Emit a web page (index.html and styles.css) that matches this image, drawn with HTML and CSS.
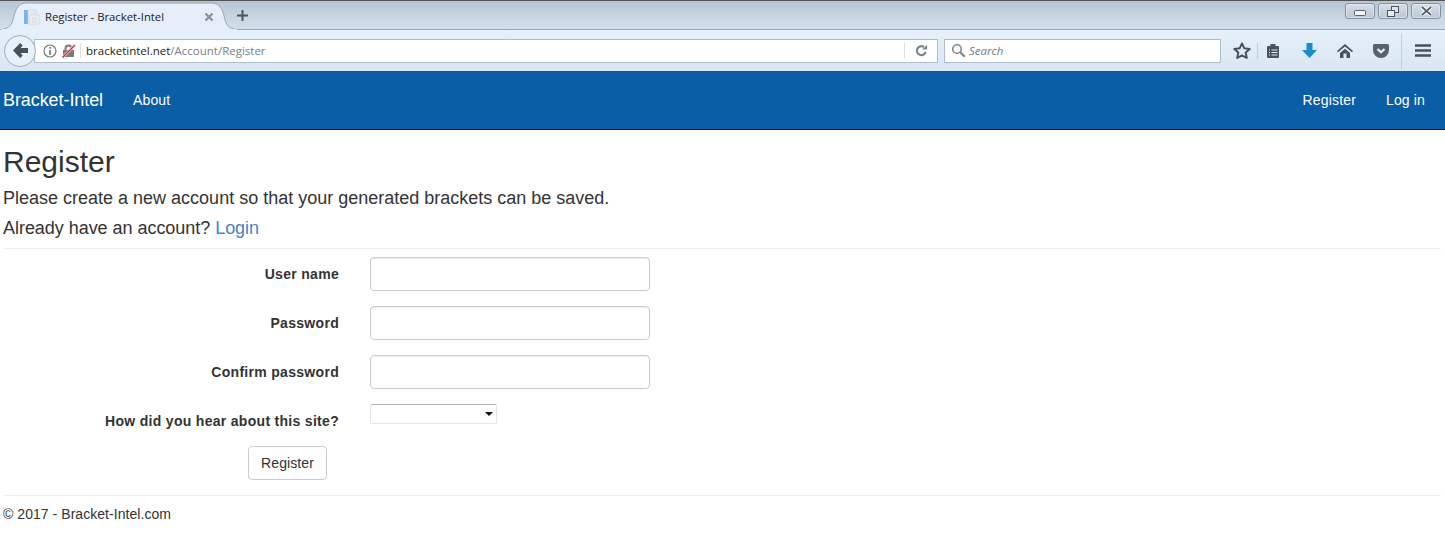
FILE: index.html
```html
<!DOCTYPE html>
<html lang="en">
<head>
  <meta charset="UTF-8" />
  <title>Register - Bracket-Intel</title>
  <link rel="stylesheet" href="styles.css">
</head>
<body>

  <!-- browser frame -->
  <div class="tabstrip">
    <div class="tab">
      <svg class="tab-shape" width="238" height="29" viewBox="0 0 238 29">
        <path d="M0 28.500C7 28 11 26 13 19 15 10 17 2.500 26 2 L212 2 C221 2.500 223 10 225 19 227 26 231 28 238 28.500z" fill="#e6eff9" stroke="#9aa6b4"/>
        <path d="M1 29h236" stroke="#e6eff9" stroke-width="2"/>
      </svg>
      <svg class="tab-icon" width="16" height="16" viewBox="0 0 16 16">
        <rect x="0" y="1" width="4" height="14" fill="#78b4e4"/>
        <rect x="4" y="1" width="8" height="14" fill="#e4eaf1" stroke="#ccd4dc" stroke-width=".6"/>
        <rect x="6" y="6" width="9" height="9" fill="#eef1f5" stroke="#ccd4dc" stroke-width=".6"/>
        <path d="M8 9h5M8 11h5M8 13h5" stroke="#cfd6dc" stroke-width="1"/>
      </svg>
      <span class="tab-title">Register - Bracket-Intel</span>
      <svg class="tab-close" width="10" height="10" viewBox="0 0 10 10"><path d="M1.500 1.500l7 7M8.500 1.500l-7 7" stroke="#8a9097" stroke-width="2.200"/></svg>
    </div>
    <svg class="new-tab" width="11" height="11" viewBox="0 0 11 11"><path d="M5.500 0v11M0 5.500h11" stroke="#4c5660" stroke-width="2"/></svg>
    <div class="win-buttons">
      <div class="win-btn"><svg class="win-min" width="12" height="6" viewBox="0 0 12 6"><rect x=".5" y=".5" width="11" height="5" rx="1" fill="#f2f4f6" stroke="#59626c"/></svg></div>
      <div class="win-btn"><svg width="12" height="11" viewBox="0 0 12 11"><rect x="4.500" y=".5" width="7" height="6" fill="#dfe6ed" stroke="#4d5660"/><rect x=".5" y="4.500" width="7" height="6" fill="#e8edf2" stroke="#4d5660"/></svg></div>
      <div class="win-btn"><svg width="13" height="10" viewBox="0 0 13 10"><path d="M2 1l9 8M11 1l-9 8" stroke="#fff" stroke-width="4"/><path d="M2 1l9 8M11 1l-9 8" stroke="#59626c" stroke-width="1.800"/></svg></div>
    </div>
  </div>

  <div class="toolbar">
    <button class="back-btn" type="button">
      <svg width="15" height="15" viewBox="0 0 15 15"><path d="M7.200 0L0 7.500 7.200 15l2.500-2.500L7.600 10H15V5H7.600l2.100-2.500z" fill="#48525c"/></svg>
    </button>
    <div class="urlbar">
      <svg class="info" width="14" height="14" viewBox="0 0 14 14"><circle cx="7" cy="7" r="6" fill="none" stroke="#6d747b" stroke-width="1.100"/><path d="M7 3v1.800M7 6v5" stroke="#6d747b" stroke-width="1.600"/></svg>
      <svg class="lock" width="14" height="14" viewBox="0 0 14 14"><rect x="1" y="6" width="11" height="7" fill="#7a7a7a"/><path d="M3.500 6V4.500a3 3 0 0 1 6 0V6" fill="none" stroke="#7a7a7a" stroke-width="2"/><path d="M0.500 13.500L13 1" stroke="#fff" stroke-width="2.500"/><path d="M0.500 13.500L13 1" stroke="#d6232a" stroke-width="1.400"/></svg>
      <span class="url"><span class="url-host">bracketintel.net</span>/Account/Register</span>
      <span class="url-sep"></span>
      <svg class="reload" width="13" height="13" viewBox="0 0 14 14"><path d="M11.500 8.500A4.800 4.800 0 1 1 9.600 3.200" fill="none" stroke="#7d868f" stroke-width="2.400"/><path d="M7.600 5.800h5.400V.8z" fill="#7d868f"/></svg>
    </div>
    <div class="searchbar">
      <svg width="15" height="15" viewBox="0 0 15 15"><circle cx="6" cy="6" r="4.300" fill="none" stroke="#7e868e" stroke-width="1.600"/><path d="M9.200 9.200l4.600 4.600" stroke="#7e868e" stroke-width="2.200"/></svg>
      <span class="search-text">Search</span>
    </div>
    <div class="tools">
      <svg class="tool-star" width="18" height="17" viewBox="0 0 18 17"><path d="M9 1.300l2.300 5 5.400.6-4 3.700 1.100 5.400L9 13.300 4.200 16l1.100-5.400-4-3.700 5.400-.6z" fill="none" stroke="#48525c" stroke-width="2" stroke-linejoin="round"/></svg>
      <span class="tool-sep"></span>
      <svg class="tool-list" width="14" height="15" viewBox="0 0 14 15"><path d="M1 4Q1 3 2 3h2.500V1h5v2H12q1 0 1 1v10q0 1-1 1H2q-1 0-1-1z" fill="#48525c"/><path d="M3 7h1M5.500 7h6M3 9.500h1M5.500 9.500h6M3 12h1M5.500 12h6" stroke="#dfe8f1" stroke-width="1"/></svg>
      <svg class="tool-down" width="15" height="15" viewBox="0 0 15 15"><path d="M4.500 0h6v7H15l-7.500 8L0 7h4.500z" fill="#1a8ccc"/></svg>
      <svg class="tool-home" width="16" height="14" viewBox="0 0 16 14"><path d="M8 0L0 7l1 1.200L8 2.400l7 5.800L16 7z" fill="#48525c"/><path d="M3 9l5-4.200L13 9v5H9.500V9.500h-3V14H3z" fill="#48525c"/></svg>
      <svg class="tool-pocket" width="16" height="14" viewBox="0 0 16 14"><path d="M1.500 0h13A1.500 1.500 0 0 1 16 1.500V6a8 8 0 0 1-16 0V1.500A1.500 1.500 0 0 1 1.500 0z" fill="#59626c"/><path d="M4.500 5L8 8.300 11.500 5" fill="none" stroke="#e6eef6" stroke-width="2.200"/></svg>
      <span class="tool-sep tool-sep-tall"></span>
      <svg class="tool-menu" width="16" height="13" viewBox="0 0 16 13"><path d="M0 1.500h16M0 6.500h16M0 11.500h16" stroke="#48525c" stroke-width="2.400"/></svg>
    </div>
  </div>

  <!-- page -->
  <nav class="navbar">
    <div class="nav-left">
      <a class="brand" href="#">Bracket-Intel</a>
      <a class="nav-link" href="#">About</a>
    </div>
    <div class="nav-right">
      <a class="nav-link" href="#">Register</a>
      <a class="nav-link" href="#">Log in</a>
    </div>
  </nav>

  <main class="content">
    <h2 class="page-title">Register</h2>
    <p class="lead">Please create a new account so that your generated brackets can be saved.</p>
    <p class="lead lead-login">Already have an account? <a href="#">Login</a></p>
    <hr class="rule rule-top">

    <form class="reg-form">
      <div class="form-row">
        <label for="userName">User name</label>
        <input id="userName" type="text">
      </div>
      <div class="form-row">
        <label for="password">Password</label>
        <input id="password" type="password">
      </div>
      <div class="form-row">
        <label for="confirm">Confirm password</label>
        <input id="confirm" type="password">
      </div>
      <div class="form-row">
        <label for="hear">How did you hear about this site?</label>
        <div class="select-box" id="hear"><span class="select-arrow"></span></div>
      </div>
      <div class="form-submit">
        <button class="btn" type="button">Register</button>
      </div>
    </form>

    <hr class="rule rule-bottom">
    <footer class="footer">© 2017 - Bracket-Intel.com</footer>
  </main>

</body>
</html>
```

FILE: styles.css
```css
* { box-sizing: border-box; }

html, body {
  margin: 0; padding: 0;
  height: 545px;
  overflow: hidden;
  background: #fff;
  font-family: "Liberation Sans", Arial, sans-serif;
  color: #333;
}

/* browser frame */
.tabstrip {
  height: 30px;
  display: flex;
  align-items: flex-start;
  border-top: 1px solid #555;
  background: linear-gradient(#b8c5d3, #d3e0ec);
  border-bottom: 1px solid #99a5b3;
}
.tab {
  width: 237px; height: 29px;
  padding: 2px 23px 0 24px;
  display: flex;
  align-items: center;
  position: relative;
}
.tab-shape { position: absolute; left: 0; top: 0; }
.tab-icon, .tab-title, .tab-close { position: relative; }
.tab-icon { flex: none; }
.tab-close { flex: none; }
.tab-title {
  margin-left: 5px;
  font: 11.3px "Open Sans", "Liberation Sans", sans-serif;
  color: #222;
  flex: 1;
  white-space: nowrap;
}
.new-tab { margin: 9px 0 0 0; }
.win-buttons { margin-left: auto; margin-right: 4px; margin-top: 2px; display: flex; gap: 3px; }
.win-btn {
  width: 30px; height: 16px;
  display: flex; align-items: center; justify-content: center;
  border: 1px solid #8592a0;
  border-radius: 3px;
  background: linear-gradient(#d5dee8, #bcc8d5);
  box-shadow: inset 0 0 0 1px rgba(255,255,255,.35);
}
.win-min { margin-top: 3px; }

.toolbar {
  height: 41px;
  display: flex;
  align-items: center;
  padding-left: 4px;
  background: linear-gradient(#e6f0fa, #d9e6f3);
}
.back-btn {
  flex: none;
  width: 32px; height: 32px;
  padding: 0;
  border-radius: 50%;
  border: 1px solid #a0acb9;
  background: #e8f0f9;
  display: flex; align-items: center; justify-content: center;
  position: relative;
  z-index: 1;
}
.urlbar {
  width: 904px; height: 24px;
  margin-left: -2px;
  padding-left: 8px;
  display: flex; align-items: center;
  background: #fff;
  border: 1px solid #afbccb;
}
.urlbar .info { flex: none; }
.urlbar .lock { flex: none; margin-left: 5px; }
.url {
  margin-left: 4px;
  padding-left: 5px;
  border-left: 1px solid #ddd;
  font: 11.5px "Open Sans", "Liberation Sans", sans-serif;
  line-height: 15px;
  color: #7a8087;
}
.url-host { color: #222; }
.url-sep { width: 1px; height: 15px; background: #ddd; margin-left: auto; }
.reload { margin: 0 9px 0 10px; }
.searchbar {
  width: 277px; height: 24px;
  margin-left: 6px;
  padding-left: 6px;
  display: flex; align-items: center; gap: 3px;
  background: #fff;
  border: 1px solid #afbccb;
}
.search-text { font: italic 11.5px "Open Sans", "Liberation Sans", sans-serif; color: #77797d; }
.tools { flex: 1; height: 100%; display: flex; align-items: center; }
.tool-star { margin-left: 12px; }
.tool-sep { width: 1px; height: 16px; background: #c2ced9; margin-left: 6px; }
.tool-list { margin-left: 8px; }
.tool-down { margin-left: 22px; }
.tool-home { margin-left: 20px; }
.tool-pocket { margin-left: 20px; }
.tool-sep-tall { height: 36px; margin-left: 12px; }
.tool-menu { margin-left: 13px; }

/* navbar */
.navbar {
  height: 59px;
  padding: 0 20px 0 3px;
  display: flex;
  justify-content: space-between;
  align-items: center;
  background: #095ea6;
  border-bottom: 1px solid #0b0b0b;
  font-size: 14px;
  letter-spacing: .15px;
}
.navbar a { color: #fff; text-decoration: none; }
.nav-left, .nav-right { display: flex; align-items: center; }
.nav-link { margin-left: 30px; }
.brand { font-size: 18px; letter-spacing: -.08px; }

/* page content */
.content { padding: 0 4px 0 3px; }
.page-title {
  margin: 0;
  padding-top: 15px;
  font-size: 30px;
  font-weight: 400;
  line-height: 33px;
  color: #333;
}
.lead {
  margin: 0;
  padding-top: 10px;
  font-size: 18px;
  line-height: 21px;
  color: #333;
}
.lead-login { padding-top: 9px; letter-spacing: -.04px; }
.lead a { color: #4a7fc7; text-decoration: none; }
.rule { border: 0; border-top: 1px solid #eee; margin: 0; }
.rule-top { margin-top: 9px; }

.reg-form { padding-top: 8px; }
.form-row {
  display: grid;
  grid-template-columns: 336px 280px;
  column-gap: 31px;
  align-items: start;
  margin-bottom: 15px;
}
.form-row label {
  padding-top: 9px;
  text-align: right;
  font-size: 14px;
  font-weight: 700;
  letter-spacing: .3px;
  line-height: 16px;
  color: #333;
}
.form-row input {
  width: 280px; height: 34px;
  border: 1px solid #ccc;
  border-radius: 4px;
  background: #fff;
  box-shadow: inset 0 1px 1px rgba(0,0,0,.075);
}
.select-box {
  width: 127px; height: 20px;
  position: relative;
  border: 1px solid #e4e4e8;
  border-top-color: #b4b4bc;
  border-radius: 2px;
  background: #fff;
}
.select-arrow {
  position: absolute;
  right: 3px; top: 7px;
  border-left: 4px solid transparent;
  border-right: 4px solid transparent;
  border-top: 4px solid #111;
}
.form-submit { padding-left: 245px; margin-top: 17px; }
.btn {
  width: 79px; height: 34px;
  padding: 0;
  border: 1px solid #ccc;
  border-radius: 4px;
  background: #fff;
  font: 14px "Liberation Sans", Arial, sans-serif;
  letter-spacing: .1px;
  color: #333;
}
.rule-bottom { margin-top: 15px; }
.footer { padding-top: 10px; font-size: 14px; line-height: 16px; letter-spacing: .05px; color: #333; }
```
